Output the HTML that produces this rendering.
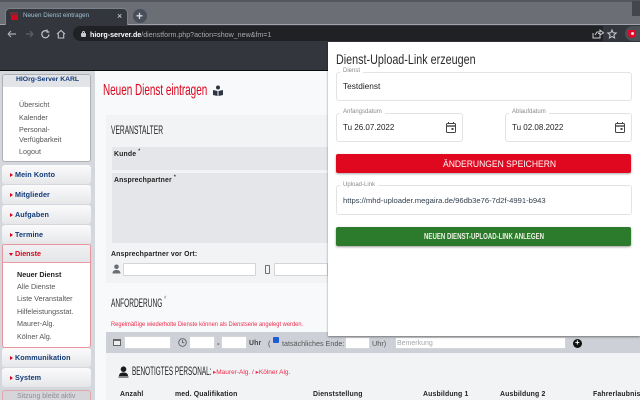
<!DOCTYPE html>
<html lang="de"><head><meta charset="utf-8"><title>Neuen Dienst eintragen</title>
<style>
html,body{margin:0;padding:0;width:640px;height:400px;overflow:hidden;background:#f8f9fb}
body{position:relative;font-family:"Liberation Sans",sans-serif;color:#222}
div,span,svg{position:absolute;box-sizing:border-box}
.t{white-space:nowrap;transform-origin:0 50%;line-height:12px}
.side{left:2px;width:89px;height:19px;background:linear-gradient(#fbfbfc,#e6e7ea);border-radius:3px}
.side b{position:absolute;left:13px;top:4px;font-size:7.2px;line-height:12px;color:#123a78;white-space:nowrap;letter-spacing:.1px}
.side i{position:absolute;left:8px;top:8px;border-left:3px solid #d9041c;border-top:2px solid transparent;border-bottom:2px solid transparent}
.inp{background:#fff;border:1px solid #d4d5d8;border-radius:1px}
.fld{background:#fff;border:1px solid #e3e3e3;border-radius:3px}
.lab{font-size:6px;color:#8a8a8a;background:#fff;padding:0 3px;line-height:7px;white-space:nowrap}
.val{font-size:8px;color:#222;white-space:nowrap;line-height:12px}
.menu{font-size:7.2px;color:#555;white-space:nowrap;line-height:11px}
.h{font-size:6.9px;font-weight:bold;color:#222;white-space:nowrap;line-height:11px;letter-spacing:.15px}
</style></head><body>

<!-- browser chrome -->
<div style="left:0;top:0;width:640px;height:25px;background:#6b6e74;border-top:2px solid #54565b"></div>
<div style="left:632px;top:1px;width:8px;height:15px;background:#43464d"></div>
<div style="left:5px;top:8px;width:123px;height:17px;background:#33363d;border-radius:5px 5px 0 0;border:1px solid #7a8088;border-bottom:0"></div>
<div style="left:0;top:24px;width:5px;height:1px;background:#a0a4aa"></div>
<div style="left:128px;top:24px;width:512px;height:1px;background:#a0a4aa"></div>
<div style="left:11px;top:13px;width:7px;height:7px;background:#d2091c;border-radius:1px"></div>
<div style="left:10px;top:12px;width:8px;height:3px;background:#6a3038"></div>
<div class="t" style="left:23px;top:10px;font-size:6.300px;color:#9fc3d6">Neuen Dienst eintragen</div>
<div class="t" style="left:117px;top:10px;font-size:9px;color:#dfe1e5">×</div>
<div style="left:133px;top:9px;width:14px;height:14px;border-radius:50%;background:#484f5b"></div>
<div class="t" style="left:136px;top:10px;font-size:12px;font-weight:bold;color:#d6d9de">+</div>

<div style="left:0;top:25px;width:640px;height:16px;background:#33363c"></div>
<svg style="left:6px;top:28px" width="60" height="12" viewBox="0 0 60 12" fill="none" stroke-width="1.2">
<path d="M2 6h8M2 6l3-3M2 6l3 3" stroke="#a8abb0"/>
<path d="M20 6h7M27 6l-3-3M27 6l-3 3" stroke="#5f6268"/>
<path d="M41 3a3.600 3.600 0 1 0 2 3.400M41 1.500v2.500h2.400" stroke="#c6c8cc"/>
</svg>
<svg style="left:55px;top:28px" width="12" height="12" viewBox="0 0 12 12" fill="none" stroke="#c0c2c6" stroke-width="1.100"><path d="M2 6l4-3.500L10 6M3.300 5.500V10h5.400V5.500"/></svg>
<div style="left:73px;top:26px;width:530px;height:15px;background:#202124;border-radius:8px 0 0 8px"></div>
<div style="left:81px;top:33px;width:5px;height:4px;background:#c8cacd;border-radius:1px"></div>
<div style="left:82px;top:31px;width:3px;height:3px;border:1px solid #c8cacd;border-bottom:0;border-radius:2px 2px 0 0"></div>
<div class="t" style="left:90px;top:29px;font-size:7.100px;color:#a7a9ad"><span style="position:static;color:#fff;font-weight:bold">hiorg-server.de</span>/dienstform.php?action=show_new&amp;fm=1</div>
<svg style="left:590px;top:28px" width="30" height="12" viewBox="0 0 30 12" fill="none" stroke="#c8cacd" stroke-width="1"><path d="M3 5v5h7V7M5 7l2-3h3V2l3.500 2.800L10 7V5.500H8"/><path d="M22 2l1.200 2.800 3 .2-2.300 2 .7 3-2.600-1.600L19.400 10l.7-3-2.300-2 3-.2z"/></svg>
<div style="left:625px;top:26px;width:15px;height:15px;border-radius:50% 0 0 50%;background:#4b4f56"></div>
<div style="left:628px;top:30px;width:8px;height:8px;background:#e0082a;border-radius:1px 1px 4px 4px"></div>
<div style="left:631px;top:32px;width:3px;height:3px;background:#f6dce0;border-radius:50%"></div>

<!-- page header -->
<div style="left:0;top:41px;width:640px;height:29px;background:#33363d"></div>
<div style="left:0;top:70px;width:640px;height:1px;background:#0b0b0c"></div>

<!-- sidebar -->
<div style="left:0;top:71px;width:95px;height:329px;background:#d4d7dc"></div>
<div style="left:2px;top:74px;width:89px;height:88px;background:#fff;border:1px solid #aeb0b4;border-radius:3px"></div>
<div style="left:3px;top:75px;width:87px;height:12px;background:#e3e4e7;border-radius:2px 2px 0 0"></div>
<div class="t" style="left:16px;top:74px;font-size:6.800px;font-weight:bold;color:#123a78">HIOrg-Server KARL</div>
<div class="menu" style="left:19px;top:99px">Übersicht</div>
<div class="menu" style="left:19px;top:112px">Kalender</div>
<div class="menu" style="left:19px;top:124px">Personal-</div>
<div class="menu" style="left:19px;top:134px">Verfügbarkeit</div>
<div class="menu" style="left:19px;top:146px">Logout</div>

<div class="side" style="top:165px"><i></i><b>Mein Konto</b></div>
<div class="side" style="top:185px"><i></i><b>Mitglieder</b></div>
<div class="side" style="top:205px"><i></i><b>Aufgaben</b></div>
<div class="side" style="top:225px"><i></i><b>Termine</b></div>

<div style="left:2px;top:244px;width:89px;height:104px;background:#fff;border:1px solid #e8949d;border-radius:3px"></div>
<div style="left:3px;top:245px;width:87px;height:18px;background:linear-gradient(#f1f1f3,#e4e5e8);border-bottom:1px solid #ec9ba4;border-radius:2px 2px 0 0"></div>
<div style="left:9px;top:253px;border-top:3px solid #d9041c;border-left:2px solid transparent;border-right:2px solid transparent"></div>
<div class="t" style="left:15px;top:248px;font-size:7.200px;font-weight:bold;color:#d9041c">Dienste</div>
<div class="menu" style="left:17px;top:269px;color:#222;font-weight:bold">Neuer Dienst</div>
<div class="menu" style="left:17px;top:281px">Alle Dienste</div>
<div class="menu" style="left:17px;top:293px">Liste Veranstalter</div>
<div class="menu" style="left:17px;top:306px">Hilfeleistungsstat.</div>
<div class="menu" style="left:17px;top:318px">Maurer-Alg.</div>
<div class="menu" style="left:17px;top:331px">Kölner Alg.</div>

<div class="side" style="top:348px"><i></i><b>Kommunikation</b></div>
<div class="side" style="top:368px"><i></i><b>System</b></div>
<div style="left:2px;top:390px;width:89px;height:12px;background:#d5d5da;border:1px solid #e0a6ad;border-radius:3px"></div>
<div class="t" style="left:17px;top:391px;font-size:7px;color:#8d8f94">Sitzung bleibt aktiv</div>

<!-- content -->
<div class="t" style="left:103px;top:83px;font-size:16px;line-height:16px;color:#d9041c;transform:scaleX(.62)">Neuen Dienst eintragen</div>
<svg style="left:212px;top:85px" width="12" height="12" viewBox="0 0 12 12" fill="#2d3640"><circle cx="6" cy="2.500" r="2"/><path d="M1 5l4.500 1v5L1 10zM11 5L6.500 6v5L11 10z"/></svg>

<div style="left:106px;top:115px;width:222px;height:168px;background:#f2f3f5"></div>
<div class="t" style="left:111px;top:125px;font-size:11.500px;color:#222;transform:scaleX(.58)">VERANSTALTER</div>
<div style="left:112px;top:147px;width:216px;height:23px;background:#e5e6e9"></div>
<div style="left:112px;top:173px;width:216px;height:70px;background:#e5e6e9"></div>
<div class="h" style="left:114px;top:149px">Kunde <sup style="font-size:5px;line-height:0">*</sup></div>
<div class="h" style="left:114px;top:175px">Ansprechpartner <sup style="font-size:5px;line-height:0">*</sup></div>
<div class="h" style="left:111px;top:249px">Ansprechpartner vor Ort:</div>
<svg style="left:112px;top:264px" width="9" height="10" viewBox="0 0 9 10" fill="#6b6f75"><circle cx="4.500" cy="2.800" r="2.300"/><path d="M.5 9.500c0-3 2-3.500 4-3.500s4 .5 4 3.500z"/></svg>
<div class="inp" style="left:123px;top:263px;width:133px;height:13px"></div>
<div style="left:265px;top:265px;width:5px;height:9px;border:1px solid #6b6f75;border-radius:1px"></div>
<div class="inp" style="left:274px;top:263px;width:54px;height:13px"></div>

<div class="t" style="left:111px;top:298px;font-size:11.500px;color:#222;transform:scaleX(.57)">ANFORDERUNG <sup style="font-size:9px;line-height:0;color:#777">*</sup></div>
<div class="t" style="left:111px;top:319px;font-size:6.300px;color:#ef2a4a;transform:scaleX(.915)">Regelmäßige wiederholte Dienste können als Dienstserie angelegt werden.</div>

<div style="left:106px;top:332px;width:534px;height:21px;background:#cdd0d6"></div>
<div style="left:106px;top:353px;width:534px;height:47px;background:#f2f3f5"></div>
<div style="left:113px;top:339px;width:8px;height:7px;background:#eee;border:1px solid #666;border-top-width:2px"></div>
<div class="inp" style="left:124px;top:336px;width:47px;height:13px"></div>
<svg style="left:178px;top:338px" width="9" height="9" viewBox="0 0 9 9" fill="none" stroke="#5c5f64" stroke-width=".9"><circle cx="4.500" cy="4.500" r="3.800"/><path d="M4.500 2v2.700h1.800"/></svg>
<div class="inp" style="left:189px;top:336px;width:26px;height:13px"></div>
<div class="t" style="left:217px;top:338px;font-size:8px;font-weight:bold;color:#555">-</div>
<div class="inp" style="left:221px;top:336px;width:26px;height:13px"></div>
<div class="h" style="left:249px;top:338px;color:#444">Uhr</div>
<div class="t" style="left:268px;top:338px;font-size:7.300px;color:#444">(</div>
<div style="left:273px;top:337px;width:6px;height:6px;background:#1e5bd6;border-radius:1px"></div>
<div class="t" style="left:282px;top:338px;font-size:7.200px;color:#555">tatsächliches Ende:</div>
<div class="inp" style="left:345px;top:337px;width:25px;height:12px"></div>
<div class="t" style="left:372px;top:338px;font-size:7.300px;color:#555">Uhr)</div>
<div class="inp" style="left:395px;top:337px;width:171px;height:12px"></div>
<div class="t" style="left:397px;top:338px;font-size:7px;color:#a5a7aa">Bemerkung</div>
<div style="left:573px;top:339px;width:9px;height:9px;border-radius:50%;background:#111"></div>
<div class="t" style="left:575px;top:338px;font-size:8px;line-height:10px;font-weight:bold;color:#fff">+</div>

<svg style="left:118px;top:366px" width="11" height="12" viewBox="0 0 11 12" fill="#1b1b1b"><circle cx="5.500" cy="3.200" r="2.800"/><path d="M1 10c0-3 2.500-3.500 4.500-3.500S10 7 10 10zM.5 10.500h10v1H.5z"/></svg>
<div class="t" style="left:132px;top:366px;font-size:11.500px;color:#222;transform:scaleX(.555)">BENÖTIGTES PERSONAL:</div>
<div class="t" style="left:213px;top:367px;font-size:6.500px;color:#ef2a4a">▸Maurer-Alg. / ▸Kölner Alg.</div>
<div class="h" style="left:120px;top:389px">Anzahl</div>
<div class="h" style="left:175px;top:389px">med. Qualifikation</div>
<div class="h" style="left:313px;top:389px">Dienststellung</div>
<div class="h" style="left:423px;top:389px">Ausbildung 1</div>
<div class="h" style="left:500px;top:389px">Ausbildung 2</div>
<div class="h" style="left:593px;top:389px">Fahrerlaubnis</div>

<!-- modal -->
<div style="left:328px;top:42px;width:312px;height:294px;background:#fff;box-shadow:0 1px 2px rgba(0,0,0,.45)"></div>
<div class="t" style="left:336px;top:52px;font-size:14px;line-height:15px;color:#2b2b2b;transform:scaleX(.77)">Dienst-Upload-Link erzeugen</div>

<div class="fld" style="left:336px;top:72px;width:296px;height:29px"></div>
<div class="lab" style="left:340px;top:68px">Dienst</div>
<div class="val" style="left:343px;top:80px;font-size:8.300px">Testdienst</div>

<div class="fld" style="left:336px;top:113px;width:127px;height:29px"></div>
<div class="lab" style="left:340px;top:109px">Anfangsdatum</div>
<div class="val" style="left:343px;top:122px">Tu 26.07.2022</div>
<svg style="left:445px;top:121px" width="12" height="13" viewBox="0 0 12 13" fill="none" stroke="#444" stroke-width="1"><rect x="1.500" y="2.500" width="9" height="9" rx="1"/><path d="M1.500 5h9" stroke-width="1.400"/><path d="M3.500 1v2M8.500 1v2"/><rect x="6.500" y="7" width="2" height="2" fill="#444" stroke="none"/></svg>

<div class="fld" style="left:505px;top:113px;width:127px;height:29px"></div>
<div class="lab" style="left:509px;top:109px">Ablaufdatum</div>
<div class="val" style="left:512px;top:122px">Tu 02.08.2022</div>
<svg style="left:614px;top:121px" width="12" height="13" viewBox="0 0 12 13" fill="none" stroke="#444" stroke-width="1"><rect x="1.500" y="2.500" width="9" height="9" rx="1"/><path d="M1.500 5h9" stroke-width="1.400"/><path d="M3.500 1v2M8.500 1v2"/><rect x="6.500" y="7" width="2" height="2" fill="#444" stroke="none"/></svg>

<div style="left:336px;top:154px;width:295px;height:19px;background:#e0081e;border-radius:2px;box-shadow:0 1px 2px rgba(0,0,0,.35)"></div>
<div class="t" style="left:443px;top:158px;font-size:9px;color:#fff;transform:scaleX(.95)">ÄNDERUNGEN SPEICHERN</div>

<div class="fld" style="left:336px;top:185px;width:296px;height:30px"></div>
<div class="lab" style="left:340px;top:182px">Upload-Link</div>
<div class="val" style="left:343px;top:195px;font-size:7.650px;color:#33404d">https://mhd-uploader.megaira.de/96db3e76-7d2f-4991-b943</div>

<div style="left:336px;top:227px;width:295px;height:19px;background:#2c7a2c;border-radius:2px;box-shadow:0 1px 2px rgba(0,0,0,.4)"></div>
<div class="t" style="left:424px;top:231px;font-size:8px;font-weight:bold;color:#f0f2e8;transform:scaleX(.76)">NEUEN DIENST-UPLOAD-LINK ANLEGEN</div>

</body></html>
